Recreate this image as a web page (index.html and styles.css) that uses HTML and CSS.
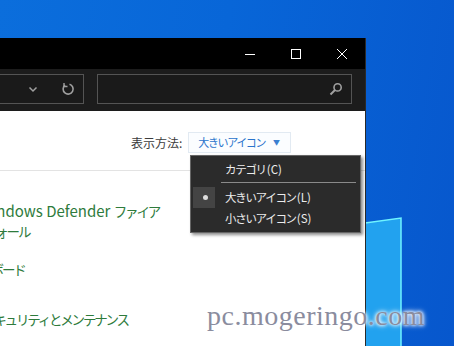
FILE: index.html
```html
<!DOCTYPE html>
<html lang="ja">
<head>
    <meta charset="UTF-8">
    <title>コントロール パネル</title>
    <link rel="stylesheet" href="styles.css">
</head>
<body>
    <div class="desktop">
        <svg class="logo-pane" width="60" height="140" viewBox="0 0 60 140">
            <polygon points="0,6 36,1 36,140 0,140" fill="#22a2ef"/>
            <polyline points="0,6 36,1 36,140" fill="none" stroke="#6ff4ff" stroke-width="1.5"/>
        </svg>

        <div class="window">
            <div class="titlebar">
                <div class="caption-btn">
                    <svg width="12" height="12" viewBox="0 0 12 12"><path d="M1 6.5h10" stroke="#fff" stroke-width="1"/></svg>
                </div>
                <div class="caption-btn">
                    <svg width="12" height="12" viewBox="0 0 12 12"><rect x="1.5" y="1.5" width="9" height="9" fill="none" stroke="#fff" stroke-width="1"/></svg>
                </div>
                <div class="caption-btn">
                    <svg width="12" height="12" viewBox="0 0 12 12"><path d="M1 1l10 10M11 1L1 11" stroke="#fff" stroke-width="1"/></svg>
                </div>
            </div>

            <div class="toolbar">
                <div class="address">
                    <svg width="10" height="8" viewBox="0 0 10 8"><path d="M1.5 2.5l3.5 3.5 3.5-3.5" fill="none" stroke="#a0a0a0" stroke-width="1.5"/></svg>
                    <svg width="14" height="14" viewBox="0 0 14 14"><path d="M4 3.2A5 5 0 1 0 8.5 2.3" fill="none" stroke="#a0a0a0" stroke-width="1.6"/><path d="M3 1v3.5h3.5" fill="none" stroke="#a0a0a0" stroke-width="1.4"/></svg>
                </div>
                <div class="search">
                    <svg width="14" height="14" viewBox="0 0 14 14"><circle cx="8.6" cy="5.4" r="3.6" fill="none" stroke="#a0a0a0" stroke-width="1.6"/><path d="M6 8l-4.5 4.5" stroke="#a0a0a0" stroke-width="2"/></svg>
                </div>
            </div>

            <div class="content">
                <div class="view-row">
                    <span class="view-label">表示方法:</span>
                    <span class="view-btn">大きいアイコン <span class="caret">▼</span></span>
                </div>
                <div class="divider"></div>
                <ul class="items">
                    <li class="item item-firewall">
                        <span class="line">Windows Defender <span class="jp">ファイア</span></span>
                        <span class="line line-wrap jp">ウォール</span>
                    </li>
                    <li class="item item-keyboard"><span class="jp">キーボード</span></li>
                    <li class="item item-security"><span class="jp">セキュリティとメンテナンス</span></li>
                </ul>
            </div>
        </div>

        <div class="menu">
            <div class="menu-item">カテゴリ<span class="key">(C)</span></div>
            <div class="menu-sep"></div>
            <div class="menu-item checked"><span class="bullet"></span>大きいアイコン<span class="key">(L)</span></div>
            <div class="menu-item">小さいアイコン<span class="key">(S)</span></div>
        </div>

        <div class="watermark">pc.mogeringo.com</div>
    </div>
</body>
</html>
```

FILE: styles.css
```css
* {
    margin: 0;
    padding: 0;
    box-sizing: border-box;
}

body {
    width: 454px;
    height: 346px;
    overflow: hidden;
    font-family: "Noto Sans CJK JP", "Noto Sans", sans-serif;
}

.desktop {
    position: relative;
    width: 454px;
    height: 346px;
    overflow: hidden;
    background: linear-gradient(100deg, #0b6edc 0%, #0866d8 45%, #0757cd 100%);
}

.logo-pane {
    position: absolute;
    left: 365px;
    top: 217px;
}

.window {
    position: absolute;
    left: -1px;
    top: 38px;
    width: 367px;
    height: 320px;
    display: flex;
    flex-direction: column;
    background: #fff;
    border-right: 1px solid #2a2a2a;
}

.titlebar {
    height: 31px;
    background: #000;
    display: flex;
    justify-content: flex-end;
}

.caption-btn {
    width: 46px;
    display: flex;
    align-items: center;
    justify-content: center;
}

.toolbar {
    height: 42px;
    background: #1c1c1c;
    display: flex;
    gap: 13px;
    padding: 5px 13px 0 0;
}

.address,
.search {
    height: 30px;
    border: 1px solid #545454;
    background: #1a1a1a;
    display: flex;
    align-items: center;
}

.address {
    width: 85px;
    justify-content: flex-end;
    gap: 23px;
    padding-right: 8px;
}

.search {
    flex: 1;
    justify-content: flex-end;
    padding-right: 8px;
}

.content {
    flex: 1;
    padding-top: 20px;
    color: #222;
}

.view-row {
    display: flex;
    justify-content: flex-end;
    align-items: center;
    padding-right: 74px;
    height: 22px;
}

.view-label {
    font-size: 12px;
    color: #3c3c3c;
    margin-right: 6px;
}

.view-btn {
    font-size: 11px;
    letter-spacing: -1.4px;
    color: #2a74cc;
    border: 1px solid #e2eaf2;
    background: #fbfdff;
    padding: 1px 10px 1px 9px;
    height: 21px;
    display: flex;
    align-items: center;
}

.caret {
    font-size: 7px;
    letter-spacing: 0;
    margin-left: 8px;
    color: #3a7fd0;
}

.divider {
    height: 1px;
    background: #e3e3e3;
    margin-top: 17px;
}

.items {
    list-style: none;
    margin-left: -18px;
}

.item {
    font-size: 15px;
    line-height: 20px;
    color: #2e7b3c;
    white-space: nowrap;
}

.line {
    display: block;
}

.line-wrap {
    margin-left: 5px;
}

.jp {
    font-size: 13.5px;
    letter-spacing: -2.2px;
}

.item-firewall {
    margin-top: 30px;
    margin-left: -2px;
}

.item-keyboard {
    margin-top: 18px;
    margin-left: -13px;
}

.item-security {
    margin-top: 30px;
    margin-left: 1px;
}

.menu {
    position: absolute;
    left: 190px;
    top: 155px;
    width: 171px;
    background: #2b2b2b;
    border: 1px solid #666;
    box-shadow: 2px 2px 3px rgba(0, 0, 0, 0.45);
    padding: 3px 2px 3px 2px;
    color: #ececec;
    font-size: 11.5px;
    letter-spacing: -1.3px;
}

.key {
    letter-spacing: 0;
    margin-left: 1px;
}

.menu-item {
    position: relative;
    height: 21px;
    line-height: 21px;
    padding-left: 32px;
}

.menu-sep {
    height: 1px;
    background: #8a8a8a;
    margin: 2px 2px 4px 28px;
}

.bullet {
    position: absolute;
    left: 0;
    top: 0;
    width: 22px;
    height: 21px;
    background: #444;
}

.bullet::after {
    content: "";
    position: absolute;
    left: 10px;
    top: 8px;
    width: 5px;
    height: 5px;
    border-radius: 50%;
    background: #ddd;
}

.watermark {
    position: absolute;
    left: 207px;
    top: 300px;
    font-family: "Liberation Serif", serif;
    font-size: 28px;
    letter-spacing: 0.5px;
    color: #8a8c9e;
    text-shadow: 0 0 3px #fff, 0 0 4px #fff, 0 0 6px #fff;
}
```
